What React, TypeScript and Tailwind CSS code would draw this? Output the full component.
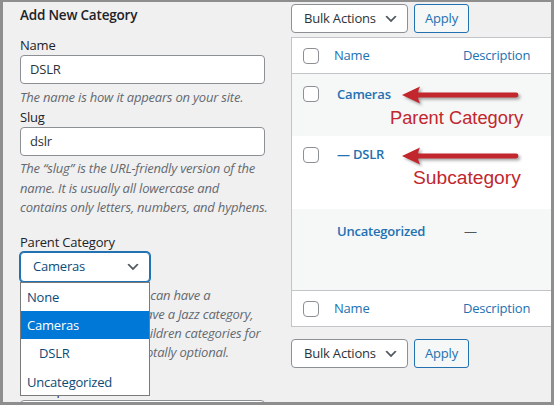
import React from "react";

// WordPress "Categories" screen, with an open parent dropdown and red callouts.

const Chevron = ({ className = "" }: { className?: string }) => (
  <svg viewBox="0 0 20 20" className={className} fill="#50575e">
    <path d="M5 6l5 5 5-5 2 1-7 7-7-7 2-1z" />
  </svg>
);

const Checkbox = () => (
  <span className="block h-4 w-4 rounded-[4px] border border-[#8c8f94] bg-white" />
);

function Arrow({ top }: { top: number }) {
  return (
    <svg
      width="124"
      height="24"
      viewBox="0 0 124 24"
      className="absolute left-[109px] drop-shadow-[2px_2px_1.5px_rgba(0,0,0,0.35)]"
      style={{ top }}
    >
      <path d="M2 12 L20 3.5 Q17.5 9.5 18.5 9.6 L116 9.6 Q118.4 9.6 118.4 12 Q118.4 14.4 116 14.4 L18.5 14.4 Q17.5 14.5 20 20.5 Z" fill="#c1272d" />
    </svg>
  );
}

function BulkBar() {
  return (
    <div className="flex h-[29px] gap-[6px]">
      <div className="flex w-[117px] items-center justify-between whitespace-nowrap rounded-[4px] border border-[#8c8f94] bg-white pl-[12px] pr-[8px] text-[13px] text-[#2c3338]">
        <span>Bulk Actions</span>
        <Chevron className="h-4 w-4 shrink-0" />
      </div>
      <div className="flex w-[55px] items-center justify-center rounded-[3px] border border-[#2271b1] bg-[#f6f7f7] text-[13px] text-[#2271b1]">
        Apply
      </div>
    </div>
  );
}

function HeadRow({ top }: { top?: boolean }) {
  return (
    <div
      className={
        "flex h-[36px] items-center bg-white text-[13px] text-[#2271b1] " +
        (top ? "border-b border-[#c3c4c7]" : "border-t border-[#c3c4c7]")
      }
    >
      <div className="w-[34px] pl-[11px]">
        <Checkbox />
      </div>
      <div className="w-[129px] pl-[8px]">Name</div>
      <div className="pl-[8px]">Description</div>
    </div>
  );
}

export default function App() {
  return (
    <div className="h-[405px] w-[554px] overflow-hidden border-x-[3px] border-t-2 border-b-[3px] border-[#8e8e8e] bg-[#f0f0f1] font-['Segoe_UI','Open_Sans',sans-serif] text-[13px] tracking-[-0.2px] text-[#3c434a]">
      <div className="flex gap-[26px] pl-[17px]">
        {/* left: add form */}
        <div className="flex w-[245px] shrink-0 flex-col">
          <h2 className="mt-[3px] text-[13.5px] font-semibold leading-5 text-[#1d2327]">Add New Category</h2>

          <label className="mt-[10px] leading-5 text-[#1d2327]">Name</label>
          <div className="flex h-[29px] items-center rounded-[4px] border border-[#8c8f94] bg-white pl-[9px] text-[13px] text-[#2c3338]">
            DSLR
          </div>
          <p className="mt-[4px] whitespace-nowrap italic leading-[19px] text-[#646970]">The name is how it appears on your site.</p>

          <label className="leading-5 text-[#1d2327]">Slug</label>
          <div className="flex h-[29px] items-center rounded-[4px] border border-[#8c8f94] bg-white pl-[9px] text-[13px] text-[#2c3338]">
            dslr
          </div>
          <p className="mt-[3px] whitespace-nowrap italic leading-[19.5px] text-[#646970]">
            The “slug” is the URL-friendly version of the
            <br />
            name. It is usually all lowercase and
            <br />
            contains only letters, numbers, and hyphens.
          </p>

          <label className="mt-[14px] leading-5 text-[#1d2327]">Parent Category</label>
          <div className="relative">
            <div className="flex h-[30px] w-[130px] items-center justify-between rounded-[4px] border border-[#2271b1] bg-white pl-[12px] pr-[8px] text-[13px] text-[#0a4b78] shadow-[0_0_0_1px_#2271b1]">
              <span>Cameras</span>
              <Chevron className="h-4 w-4" />
            </div>
            <p className="mt-[4px] whitespace-nowrap italic leading-[19px] text-[#646970]">
              Categories, unlike tags, can have a
              <br />
              hierarchy. You might have a Jazz category,
              <br />
              and under that have children categories for
              <br />
              Bebop and Big Band. Totally optional.
            </p>

            {/* open native dropdown */}
            <div className="absolute left-0 top-[30px] z-10 w-[130px] border border-[#7a7a7a] bg-white text-[13px] text-[#0a4b78]">
              <div className="flex h-[28px] items-center pl-[6px] pt-[3px]">None</div>
              <div className="flex h-[28px] items-center bg-[#0078d7] pl-[6px] pt-[2px] text-white">Cameras</div>
              <div className="flex h-[28px] items-center pl-[18px] pt-[3px]">DSLR</div>
              <div className="flex h-[28px] items-center pl-[6px] pt-[4px]">Uncategorized</div>
            </div>
          </div>

          <label className="mt-[18px] leading-5 text-[#1d2327]">Description</label>
          <div className="h-[60px] rounded-[4px] border border-[#8c8f94] bg-white" />
        </div>

        {/* right: list table */}
        <div className="relative w-[280px] shrink-0 pt-[2px]">
          <BulkBar />

          <div className="mt-[4px] border border-[#c3c4c7]">
            <HeadRow top />
            <div className="flex h-[62px] items-start bg-[#f6f7f7]">
              <div className="w-[34px] pl-[11px] pt-[12px]">
                <Checkbox />
              </div>
              <div className="pl-[11px] pt-[10px] text-[13px] font-semibold leading-5 text-[#2271b1]">Cameras</div>
            </div>
            <div className="flex h-[73px] items-start bg-white">
              <div className="w-[34px] pl-[11px] pt-[11px]">
                <Checkbox />
              </div>
              <div className="pl-[11px] pt-[8px] text-[13px] font-semibold leading-5 text-[#2271b1]">— DSLR</div>
            </div>
            <div className="flex h-[81px] items-start bg-[#f6f7f7]">
              <div className="w-[34px]" />
              <div className="w-[129px] pl-[11px] pt-[12px] text-[13px] font-semibold leading-5 text-[#2271b1]">Uncategorized</div>
              <div className="pl-[9px] pt-[12px] leading-5 text-[#50575e]">—</div>
            </div>
            <HeadRow />
          </div>

          <div className="mt-[12px]">
            <BulkBar />
          </div>

          <p className="mt-[30px] w-[262px] whitespace-nowrap leading-[19px] text-[#3c434a]">
            Deleting a category does not delete the posts in that category.
          </p>

          {/* red callouts */}
          <Arrow top={81} />
          <span className="absolute left-[99px] top-[105px] font-['Liberation_Sans',Arial,sans-serif] text-[18.3px] leading-[22px] tracking-normal text-[#c1272d]">
            Parent Category
          </span>
          <Arrow top={142} />
          <span className="absolute left-[122px] top-[165px] font-['Liberation_Sans',Arial,sans-serif] text-[19.2px] leading-[22px] tracking-normal text-[#c1272d]">
            Subcategory
          </span>
        </div>
      </div>
    </div>
  );
}
